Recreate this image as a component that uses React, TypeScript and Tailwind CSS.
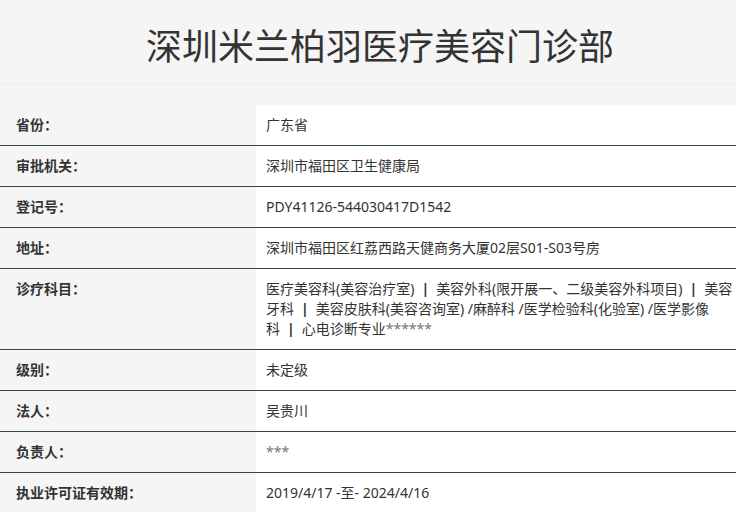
const rows: { label: string; value: React.ReactNode }[] = [
  { label: "省份：", value: "广东省" },
  { label: "审批机关：", value: "深圳市福田区卫生健康局" },
  { label: "登记号：", value: "PDY41126-544030417D1542" },
  { label: "地址：", value: "深圳市福田区红荔西路天健商务大厦02层S01-S03号房" },
  {
    label: "诊疗科目：",
    value: (
      <>
        <div className="whitespace-nowrap">
          医疗美容科(美容治疗室)<Pipe />美容外科(限开展一、二级美容外科项目)<Pipe />美容
        </div>
        <div className="whitespace-nowrap">
          牙科<Pipe />美容皮肤科(美容咨询室) /麻醉科 /医学检验科(化验室) /医学影像
        </div>
        <div className="whitespace-nowrap">
          科<Pipe />心电诊断专业<span className="text-[#777]">******</span>
        </div>
      </>
    ),
  },
  { label: "级别：", value: "未定级" },
  { label: "法人：", value: "吴贵川" },
  { label: "负责人：", value: <span className="text-[#777]">***</span> },
  { label: "执业许可证有效期：", value: "2019/4/17 -至- 2024/4/16" },
]

function Pipe() {
  return <span className="mx-[7px] font-bold text-[#333]">|</span>
}

export default function App() {
  return (
    <div
      className="w-[736px] h-[512px] overflow-hidden bg-[#f5f5f5] text-[#333]"
      style={{ fontFamily: '"Noto Sans", "Noto Sans CJK SC", sans-serif' }}
    >
      {/* Header */}
      <div className="h-[85px] flex items-center justify-center pt-[9px] pl-[24px] border-b border-[#ececec]">
        <h1 className="text-[36px] leading-none font-normal text-[#333]">深圳米兰柏羽医疗美容门诊部</h1>
      </div>

      {/* Info table */}
      <div className="mt-[20px]">
        {rows.map((row, i) => (
          <div key={row.label} className={`flex ${i === 0 ? "" : "border-t border-[#2c4b41]"}`}>
            <div className="w-[256px] shrink-0 pl-4 py-[10px] text-[14px] leading-[20px] font-bold text-[#333]">
              {row.label}
            </div>
            <div className="flex-1 bg-white pl-[10px] pr-1 py-[10px] text-[14px] leading-[20px] text-[#333] overflow-hidden">
              {row.value}
            </div>
          </div>
        ))}
      </div>
    </div>
  )
}
